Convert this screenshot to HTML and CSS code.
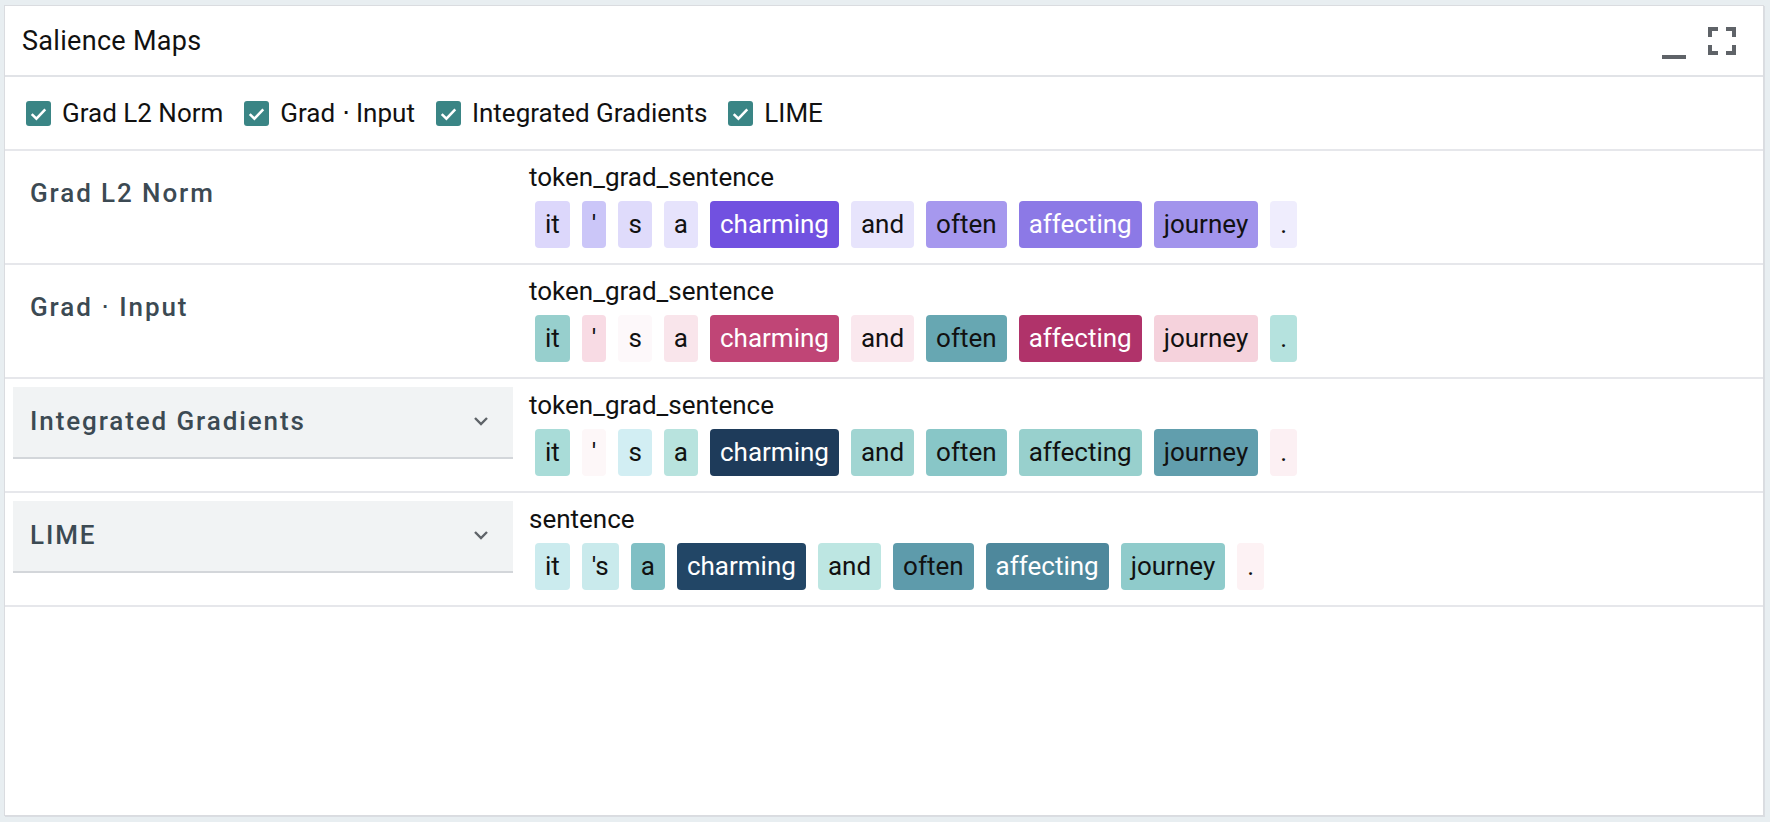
FILE: index.html
```html
<!DOCTYPE html>
<html>
<head>
<meta charset="utf-8">
<link rel="stylesheet" href="styles.css">
</head>
<body>
<div class="card">
  <div class="header">
    <span class="title">Salience Maps</span>
    <div class="icons">
      <svg class="min" width="24" height="32" viewBox="0 0 24 32"><rect x="0" y="28" width="24" height="4" fill="#5f6368"/></svg>
      <svg class="full" width="28" height="28" viewBox="0 0 28 28" fill="#5f6368">
        <rect x="0" y="0" width="10" height="4"/><rect x="0" y="0" width="4" height="10"/>
        <rect x="18" y="0" width="10" height="4"/><rect x="24" y="0" width="4" height="10"/>
        <rect x="0" y="24" width="10" height="4"/><rect x="0" y="18" width="4" height="10"/>
        <rect x="18" y="24" width="10" height="4"/><rect x="24" y="18" width="4" height="10"/>
      </svg>
    </div>
  </div>

  <div class="checks">
    <label class="check"><span class="box"><svg width="25" height="25" viewBox="0 0 24 24"><path d="M5.5 12.5 L10 17 L18.5 8" fill="none" stroke="#fff" stroke-width="2.4"/></svg></span>Grad L2 Norm</label>
    <label class="check"><span class="box"><svg width="25" height="25" viewBox="0 0 24 24"><path d="M5.5 12.5 L10 17 L18.5 8" fill="none" stroke="#fff" stroke-width="2.4"/></svg></span>Grad ⋅ Input</label>
    <label class="check"><span class="box"><svg width="25" height="25" viewBox="0 0 24 24"><path d="M5.5 12.5 L10 17 L18.5 8" fill="none" stroke="#fff" stroke-width="2.4"/></svg></span>Integrated Gradients</label>
    <label class="check"><span class="box"><svg width="25" height="25" viewBox="0 0 24 24"><path d="M5.5 12.5 L10 17 L18.5 8" fill="none" stroke="#fff" stroke-width="2.4"/></svg></span>LIME</label>
  </div>

  <div class="row">
    <div class="method"><span class="mname">Grad L2 Norm</span></div>
    <div class="content">
      <div class="field">token_grad_sentence</div>
      <div class="tokens">
        <span class="tok" style="background:#dcd7fb">it</span>
        <span class="tok" style="background:#cbc6f8">'</span>
        <span class="tok" style="background:#dfdbfb">s</span>
        <span class="tok" style="background:#e6e3fc">a</span>
        <span class="tok light" style="background:#7151e0">charming</span>
        <span class="tok" style="background:#e7e4fc">and</span>
        <span class="tok" style="background:#a698ee">often</span>
        <span class="tok light" style="background:#8c79e6">affecting</span>
        <span class="tok" style="background:#a294ec">journey</span>
        <span class="tok" style="background:#efedfd">.</span>
      </div>
    </div>
  </div>

  <div class="row">
    <div class="method"><span class="mname">Grad ⋅ Input</span></div>
    <div class="content">
      <div class="field">token_grad_sentence</div>
      <div class="tokens">
        <span class="tok" style="background:#97cfcd">it</span>
        <span class="tok" style="background:#f8dbe4">'</span>
        <span class="tok" style="background:#fdf8fa">s</span>
        <span class="tok" style="background:#f9e5eb">a</span>
        <span class="tok light" style="background:#c04576">charming</span>
        <span class="tok" style="background:#fae8ee">and</span>
        <span class="tok" style="background:#67a7b2">often</span>
        <span class="tok light" style="background:#b0336a">affecting</span>
        <span class="tok" style="background:#f5d2dc">journey</span>
        <span class="tok" style="background:#b5e2de">.</span>
      </div>
    </div>
  </div>

  <div class="row">
    <div class="method expander"><span class="mname">Integrated Gradients</span>
      <svg class="chev" width="16" height="10" viewBox="0 0 16 10"><path d="M2 2 L8 8 L14 2" fill="none" stroke="#5f6368" stroke-width="2.4"/></svg>
    </div>
    <div class="content">
      <div class="field">token_grad_sentence</div>
      <div class="tokens">
        <span class="tok" style="background:#a9dcd8">it</span>
        <span class="tok" style="background:#fdf7f8">'</span>
        <span class="tok" style="background:#d2eef3">s</span>
        <span class="tok" style="background:#b8e3de">a</span>
        <span class="tok light" style="background:#1e3b5a">charming</span>
        <span class="tok" style="background:#a1d5d2">and</span>
        <span class="tok" style="background:#88c6c7">often</span>
        <span class="tok" style="background:#98d0cd">affecting</span>
        <span class="tok" style="background:#619ead">journey</span>
        <span class="tok" style="background:#fcf0f3">.</span>
      </div>
    </div>
  </div>

  <div class="row">
    <div class="method expander"><span class="mname">LIME</span>
      <svg class="chev" width="16" height="10" viewBox="0 0 16 10"><path d="M2 2 L8 8 L14 2" fill="none" stroke="#5f6368" stroke-width="2.4"/></svg>
    </div>
    <div class="content">
      <div class="field">sentence</div>
      <div class="tokens">
        <span class="tok" style="background:#cbebee">it</span>
        <span class="tok" style="background:#c9eaec">'s</span>
        <span class="tok" style="background:#80bfc4">a</span>
        <span class="tok light" style="background:#224666">charming</span>
        <span class="tok" style="background:#bde6e2">and</span>
        <span class="tok" style="background:#5e9bab">often</span>
        <span class="tok light" style="background:#4e889c">affecting</span>
        <span class="tok" style="background:#8fcbcb">journey</span>
        <span class="tok" style="background:#fdf2f4">.</span>
      </div>
    </div>
  </div>
</div>
</body>
</html>
```

FILE: styles.css
```css
* { box-sizing: border-box; }

html, body {
  margin: 0;
  height: 100%;
}

body {
  background: #e8eef1;
  padding: 5px 6px 6px 4px;
  font-family: Roboto, "Noto Sans", "Liberation Sans", sans-serif;
  color: #202124;
}

.card {
  height: 100%;
  background: #fff;
  border: 1px solid #dadce0;
  box-shadow: 1px 1px 0 #dadde2;
  display: flex;
  flex-direction: column;
}

.header {
  height: 71px;
  flex: none;
  display: flex;
  align-items: center;
  justify-content: space-between;
  padding: 0 27px 0 17px;
  border-bottom: 2px solid #e1e3e7;
}

.title {
  font-size: 27px;
  letter-spacing: 0.3px;
  color: #111;
}

.icons {
  display: flex;
  align-items: flex-start;
  gap: 22px;
  margin-top: 5px;
}

.icons svg { display: block; }

.checks {
  height: 74px;
  flex: none;
  display: flex;
  align-items: center;
  padding-left: 21px;
  gap: 21px;
  border-bottom: 2px solid #e6e7eb;
}

.check {
  display: flex;
  align-items: center;
  gap: 11px;
  font-size: 26px;
  color: #111;
}

.box {
  width: 25px;
  height: 25px;
  border-radius: 3px;
  background: #3a8585;
  display: block;
}

.box svg { display: block; }

.row {
  height: 114px;
  flex: none;
  display: flex;
  gap: 16px;
  border-bottom: 2px solid #e6e7eb;
}

.method {
  width: 500px;
  margin: 8px 0 0 8px;
  height: 72px;
  padding: 0 24px 2px 17px;
  display: flex;
  align-items: center;
  justify-content: space-between;
  border-bottom: 2px solid transparent;
}

.method.expander {
  background: #f1f3f4;
  border-bottom-color: #d3d6da;
}

.mname {
  font-size: 26px;
  font-weight: 500;
  letter-spacing: 1.9px;
  color: #3c4a53;
}

.chev { display: block; }

.content {
  padding-top: 11px;
}

.field {
  font-size: 26px;
  line-height: 30px;
  color: #111;
}

.tokens {
  display: flex;
  gap: 12px;
  margin: 9px 0 0 6px;
}

.tok {
  height: 47px;
  line-height: 47px;
  padding: 0 10px;
  border-radius: 4px;
  font-size: 26px;
  color: #111;
}

.tok.light { color: #fff; }
```
